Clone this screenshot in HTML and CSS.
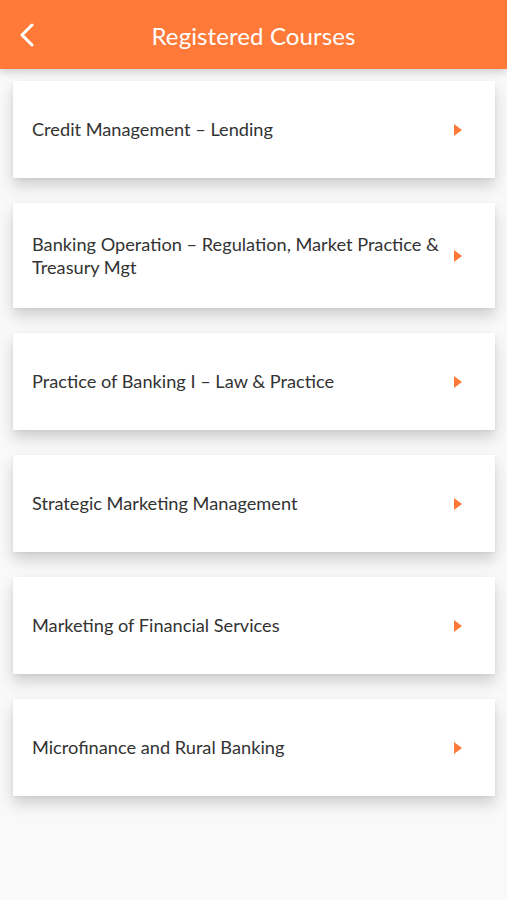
FILE: index.html
```html
<!DOCTYPE html>
<html>
<head>
<meta charset="utf-8">
<link rel="stylesheet" href="styles.css">
</head>
<body>
<header class="topbar">
  <span class="back" aria-label="Back">
    <svg width="16" height="24" viewBox="0 0 16 24"><path d="M13 2 L3 12 L13 22" fill="none" stroke="#fff" stroke-width="3" stroke-linecap="round" stroke-linejoin="round"/></svg>
  </span>
  <h1 class="title">Registered Courses</h1>
</header>
<main class="list">
  <div class="card"><span class="name">Credit Management – Lending</span><span class="arrow"></span></div>
  <div class="card"><span class="name">Banking Operation – Regulation, Market Practice &amp; Treasury Mgt</span><span class="arrow"></span></div>
  <div class="card"><span class="name">Practice of Banking I – Law &amp; Practice</span><span class="arrow"></span></div>
  <div class="card"><span class="name">Strategic Marketing Management</span><span class="arrow"></span></div>
  <div class="card"><span class="name">Marketing of Financial Services</span><span class="arrow"></span></div>
  <div class="card"><span class="name">Microfinance and Rural Banking</span><span class="arrow"></span></div>
</main>
</body>
</html>
```
FILE: styles.css
```css
* { box-sizing: border-box; }
html, body {
  margin: 0;
  padding: 0;
  background: #f9f9f9;
  font-family: Lato, "Open Sans", sans-serif;
  height: 100%;
}
.topbar {
  position: relative;
  height: 69px;
  background: #ff7a38;
  display: flex;
  align-items: center;
  justify-content: center;
  box-shadow: 0 3px 8px rgba(0,0,0,0.18);
}
.back {
  position: absolute;
  left: 19px;
  top: 23px;
  display: flex;
}
.title {
  margin: 0;
  color: #fff;
  font-weight: 400;
  font-size: 24px;
  letter-spacing: 0.1px;
  padding-top: 2px;
}
.list {
  padding: 12px 12px 0 13px;
  display: flex;
  flex-direction: column;
  gap: 25px;
}
.card {
  background: #fff;
  min-height: 97px;
  padding: 29.5px 33px 29.5px 19px;
  display: flex;
  align-items: center;
  justify-content: space-between;
  box-shadow: 0 8px 14px rgba(0,0,0,0.17), 0 1px 3px rgba(0,0,0,0.06);
}
.name {
  color: #333;
  font-size: 18.2px;
  line-height: 23px;
  max-width: 414px;
}
.arrow {
  flex: none;
  width: 0;
  height: 0;
  border-top: 6px solid transparent;
  border-bottom: 6px solid transparent;
  border-left: 8px solid #ff7a38;
}
```
